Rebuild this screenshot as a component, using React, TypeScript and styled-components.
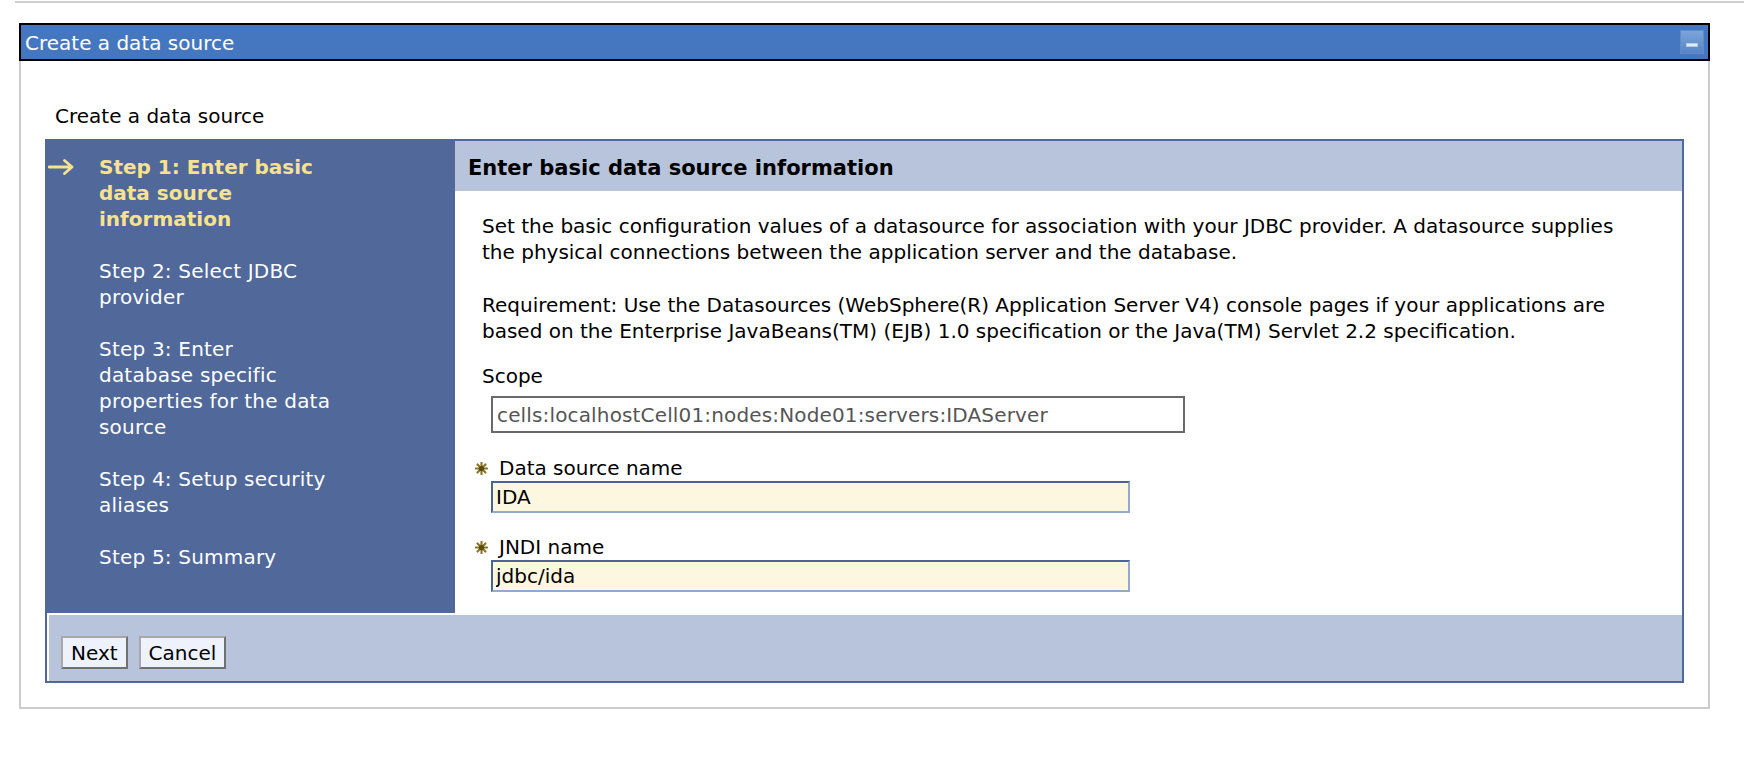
import React from "react";
import styled, { createGlobalStyle } from "styled-components";

const GlobalStyle = createGlobalStyle`
  *, *::before, *::after { box-sizing: border-box; }
  html, body { margin: 0; padding: 0; background: #fff; }
  body {
    font-family: "DejaVu Sans", Verdana, sans-serif;
    font-size: 20px;
    color: #000;
  }
`;

const TopRule = styled.div`
  margin: 1px 0 0 15px;
  border-top: 2px solid #cfcfcf;
`;

const Portlet = styled.section`
  margin: 20px 0 0 19px;
  width: 1691px;
`;

const TitleBar = styled.header`
  display: flex;
  align-items: center;
  justify-content: space-between;
  height: 38px;
  padding: 0 4px 0 4px;
  border: 2px solid #000;
  background: #4577c1;
`;

const TitleText = styled.h1`
  margin: 0;
  padding-top: 2px;
  font-size: 20px;
  font-weight: normal;
  line-height: 32px;
  color: #fff;
`;

const MinimizeButton = styled.button`
  display: flex;
  align-items: flex-end;
  justify-content: center;
  width: 24px;
  height: 24px;
  padding: 0 0 6px;
  border: 1px solid #5f8bc9;
  background: linear-gradient(#7ca4da, #5585c7);
  cursor: pointer;
`;

const MinimizeDash = styled.span`
  display: block;
  width: 12px;
  height: 4px;
  background: #e3ebf6;
  border: 1px solid #b3c8e4;
`;

const PortletBody = styled.div`
  padding: 42px 24px 24px;
  border: 2px solid #cccccc;
  border-top: none;
`;

const PageHeading = styled.h2`
  margin: 0 0 10px;
  padding-left: 10px;
  font-size: 20px;
  font-weight: normal;
  line-height: 26px;
`;

const Wizard = styled.div`
  display: grid;
  grid-template-columns: 408px 1fr;
  border: 2px solid #4f6899;
`;

const StepNav = styled.ol`
  margin: 0;
  padding: 13px 0 0 1px;
  list-style: none;
  background: #50689a;
`;

const StepRow = styled.li<{ $active?: boolean }>`
  display: grid;
  grid-template-columns: 51px 1fr;
  margin-bottom: 26px;
  line-height: 26px;
  font-weight: ${(p) => (p.$active ? "bold" : "normal")};
  color: ${(p) => (p.$active ? "#f6e28f" : "#ffffff")};
  letter-spacing: ${(p) => (p.$active ? "0" : "0.2px")};
`;

const StepMarker = styled.span`
  display: flex;
  align-items: flex-start;
  padding-top: 5px;
`;

const StepContent = styled.div`
  display: flex;
  flex-direction: column;
`;

const PanelHeader = styled.div`
  padding: 14px 13px 10px;
  background: #b8c4dc;
  font-size: 21px;
  font-weight: bold;
  line-height: 26px;
`;

const PanelBody = styled.div`
  padding: 22px 0 21px 20px;
  background: #fff;
`;

const Para = styled.p<{ $gap: number }>`
  margin: 0 0 ${(p) => p.$gap}px 7px;
  line-height: 26px;
`;

const FieldLabel = styled.div`
  margin-left: 7px;
  line-height: 26px;
`;

const RequiredLabel = styled.label`
  display: flex;
  align-items: center;
  gap: 11px;
  line-height: 26px;
`;

const ReadOnlyField = styled.input`
  display: block;
  width: 694px;
  height: 37px;
  margin: 7px 0 22px 16px;
  padding: 0 4px;
  border: 2px solid #6a6a6a;
  background: #fff;
  color: #555;
  font: inherit;
  letter-spacing: 0.15px;
  outline: none;
`;

const TextField = styled.input<{ $gap: number }>`
  display: block;
  width: 639px;
  height: 32px;
  margin: 0 0 ${(p) => p.$gap}px 16px;
  padding: 0 3px;
  border-style: solid;
  border-width: 2px;
  border-color: #4a6594 #90abcd #90abcd #4a6594;
  background: #fdf7e0;
  color: #000;
  font: inherit;
  outline: none;
`;

const Footer = styled.div`
  grid-column: 1 / -1;
  display: flex;
  gap: 11px;
  padding: 21px 12px 12px;
  border-top: 2px solid #fff;
  border-left: 2px solid #fff;
  background: #b8c4dc;
`;

const WizardButton = styled.button`
  height: 33px;
  padding: 0 8px;
  border-style: solid;
  border-width: 2px;
  border-color: #a8a8a8 #707070 #707070 #a8a8a8;
  background: #eef2fd;
  color: #000;
  font: inherit;
  line-height: 26px;
  cursor: pointer;
`;

const CurrentArrow = () => (
  <svg width="27" height="16" viewBox="0 0 27 16" aria-hidden="true">
    <path
      d="M1 8 H24 M16.5 1.5 L24 8 L16.5 14.5"
      fill="none"
      stroke="#f6e28f"
      strokeWidth="2.8"
      strokeLinecap="round"
      strokeLinejoin="round"
    />
  </svg>
);

const RequiredMark = () => (
  <svg width="13" height="13" viewBox="0 0 12 12" aria-hidden="true">
    <g stroke="#8a7628" strokeWidth="2" strokeLinecap="round">
      <path d="M6 0.8 V11.2" />
      <path d="M0.8 6 H11.2" />
      <path d="M2.3 2.3 L9.7 9.7" />
      <path d="M9.7 2.3 L2.3 9.7" />
    </g>
    <circle cx="6" cy="6" r="2.4" fill="#5a4a10" />
  </svg>
);

const steps = [
  ["Step 1: Enter basic", "data source", "information"],
  ["Step 2: Select JDBC", "provider"],
  ["Step 3: Enter", "database specific", "properties for the data", "source"],
  ["Step 4: Setup security", "aliases"],
  ["Step 5: Summary"],
];

export default function App() {
  return (
    <>
      <GlobalStyle />
      <TopRule />
      <Portlet>
        <TitleBar>
          <TitleText>Create a data source</TitleText>
          <MinimizeButton aria-label="Minimize">
            <MinimizeDash />
          </MinimizeButton>
        </TitleBar>
        <PortletBody>
          <PageHeading>Create a data source</PageHeading>
          <Wizard>
            <StepNav>
              {steps.map((lines, i) => (
                <StepRow key={i} $active={i === 0}>
                  <StepMarker>{i === 0 && <CurrentArrow />}</StepMarker>
                  <StepContent>
                    {lines.map((line) => (
                      <span key={line}>{line}</span>
                    ))}
                  </StepContent>
                </StepRow>
              ))}
            </StepNav>
            <div>
              <PanelHeader>Enter basic data source information</PanelHeader>
              <PanelBody>
                <Para $gap={27}>
                  Set the basic configuration values of a datasource for association with your JDBC provider. A datasource supplies
                  <br />
                  the physical connections between the application server and the database.
                </Para>
                <Para $gap={19}>
                  Requirement: Use the Datasources (WebSphere(R) Application Server V4) console pages if your applications are
                  <br />
                  based on the Enterprise JavaBeans(TM) (EJB) 1.0 specification or the Java(TM) Servlet 2.2 specification.
                </Para>
                <FieldLabel>Scope</FieldLabel>
                <ReadOnlyField readOnly value="cells:localhostCell01:nodes:Node01:servers:IDAServer" />
                <RequiredLabel>
                  <RequiredMark />
                  Data source name
                </RequiredLabel>
                <TextField $gap={21} defaultValue="IDA" />
                <RequiredLabel>
                  <RequiredMark />
                  JNDI name
                </RequiredLabel>
                <TextField $gap={0} defaultValue="jdbc/ida" />
              </PanelBody>
            </div>
            <Footer>
              <WizardButton>Next</WizardButton>
              <WizardButton>Cancel</WizardButton>
            </Footer>
          </Wizard>
        </PortletBody>
      </Portlet>
    </>
  );
}
